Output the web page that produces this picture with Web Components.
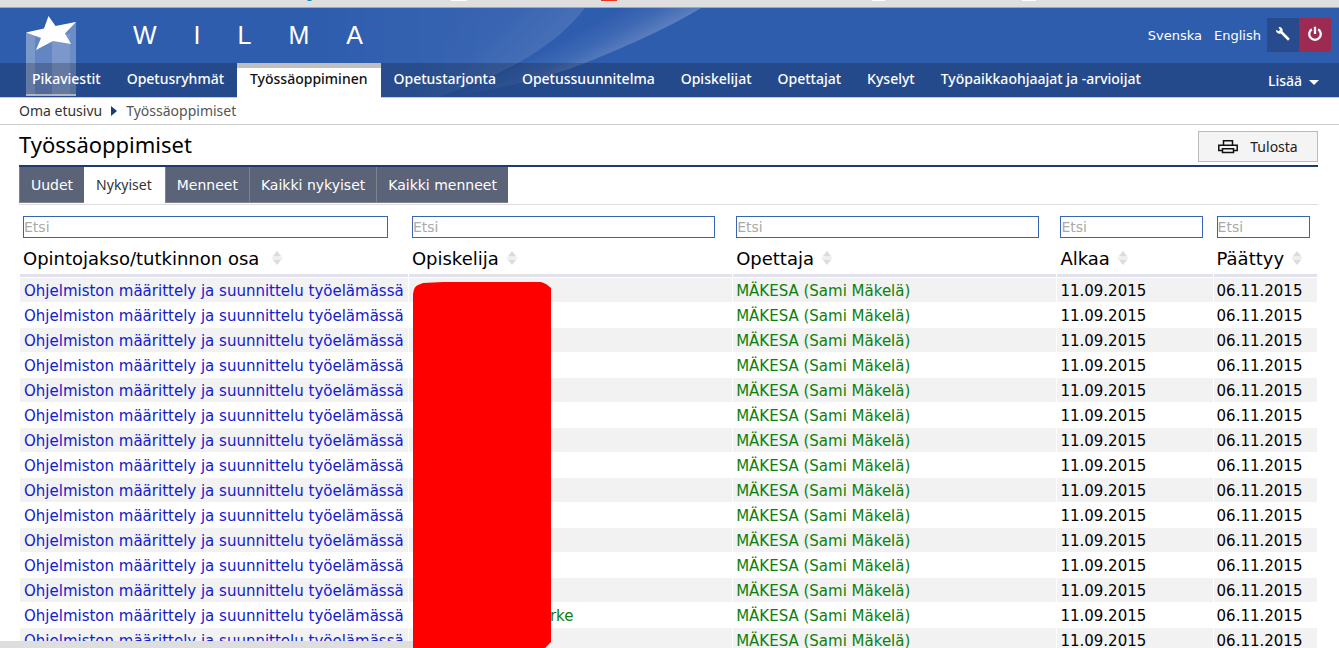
<!DOCTYPE html>
<html lang="fi">
<head>
<meta charset="utf-8">
<title>Wilma – Työssäoppimiset</title>
<style>
  html, body { margin: 0; background: #fff; }
  body { overflow: hidden; color: #000; font-family: "Noto Sans", "Open Sans", sans-serif; font-size: 14px; --wide: "DejaVu Sans", Verdana, sans-serif; }
</style>
</head>
<body>
<wilma-app></wilma-app>
<script>
function define(name, html, setup) {
  const template = document.createElement('template');
  template.innerHTML = html;
  customElements.define(name, class extends HTMLElement {
    connectedCallback() {
      if (this.shadowRoot) return;
      const root = this.attachShadow({ mode: 'open' });
      root.append(template.content.cloneNode(true));
      if (setup) setup(this, root);
    }
  });
}

/* Strip of browser chrome above the page */
define('browser-edge', `
<style>
  :host { display: block; height: 7px; background: #dedede; border-bottom: 1px solid #a6a6a6; }
  svg { display: block; width: 100%; height: 7px; }
</style>
<svg aria-hidden="true">
  <path d="M307 0h5l-1 1h-3z" fill="#1f88ba"/>
  <path d="M451 0h16v1h-16z" fill="#fff"/>
  <path d="M601 0h16v1h-16z" fill="#ee3324"/>
  <path d="M872 0h13v1h-13zM1022 0h14v1h-14z" fill="#fff"/>
</svg>`);

define('wilma-brand', `
<style>
  :host { display: flex; gap: 37px; font: 25px/28px "Liberation Sans", Arial, sans-serif; color: #fff; }
</style>
<span>W</span><span>I</span><span>L</span><span>M</span><span>A</span>`);

define('nav-item', `
<style>
  :host { display: block; }
  a { display: block; box-sizing: border-box; height: 34px; padding: 5px 13px 0; line-height: 22px; color: #fff; font-weight: 500; text-decoration: none; white-space: nowrap; }
  :host([active]) a { height: 35px; margin-bottom: -1px; padding-top: 0; border-top: 5px solid #bfbfbf; background: #fff; color: #111; }
</style>
<a href="#"><slot></slot></a>`);

define('wilma-header', `
<style>
  :host { display: block; position: relative; background: #2f5dae; border-bottom: 1px solid #c6cad8; }
  .art { position: absolute; left: 0; top: 0; width: 760px; height: 89px; }
  .top, nav { position: relative; display: flex; align-items: center; }
  .top { box-sizing: border-box; height: 55px; padding: 0 8px 2px 133px; }
  .tools { display: flex; align-items: center; margin-left: auto; }
  .lang { margin: 2px 12px 0 0; color: #fff; font-family: var(--wide); font-size: 13px; text-decoration: none; }
  .lang:nth-of-type(2) { margin-right: 6px; }
  button { display: flex; align-items: center; justify-content: center; border: 0; padding: 0; color: #fff; font: inherit; }
  .tool { width: 32px; height: 34px; background: #274b8c; }
  .tool svg { margin-bottom: 2px; }
  .exit { background: #9d2a51; }
  nav { height: 34px; padding-left: 19px; background: rgba(0,0,0,.2); align-items: flex-start; }
  .more { height: 34px; margin-left: auto; padding-right: 20px; gap: 7px; background: none; font-size: 14px; font-weight: 500; }
  .more svg { margin-top: 4px; }
</style>
<svg class="art" viewBox="0 0 760 89" aria-hidden="true">
  <defs>
    <linearGradient id="g1" gradientUnits="userSpaceOnUse" x1="562" y1="28" x2="500" y2="-34">
      <stop offset="0" stop-color="#fff" stop-opacity=".12"/><stop offset=".6" stop-color="#fff" stop-opacity=".05"/><stop offset="1" stop-color="#fff" stop-opacity=".04"/>
    </linearGradient>
    <linearGradient id="g2" gradientUnits="userSpaceOnUse" x1="640" y1="34" x2="622" y2="0">
      <stop offset="0" stop-color="#fff" stop-opacity=".22"/><stop offset=".5" stop-color="#fff" stop-opacity=".07"/><stop offset="1" stop-color="#fff" stop-opacity="0"/>
    </linearGradient>
    <linearGradient id="g0" x1="0" x2="1"><stop offset="0" stop-color="#fff" stop-opacity="0"/><stop offset=".4" stop-color="#fff"/></linearGradient>
    <mask id="m"><rect x="300" width="460" height="89" fill="url(#g0)"/></mask>
  </defs>
  <g mask="url(#m)"><path d="M300 89V0H585C571 18 549 38 518 55Q482 75 437 89Z" fill="url(#g1)"/></g>
  <path d="M437 89Q482 75 518 55C549 38 571 18 585 0H701Q660 25 585 55Q532 76 447 89Z" fill="url(#g2)"/>
  <path d="M26 25L76 14V88H26z" fill="#fff" opacity=".25"/>
  <path d="M26 25h9v63h-9zM52 29l18-4v63H52z" fill="#fff" opacity=".16"/>
  <path d="M70 14h6v74h-6z" fill="#fff" opacity=".06"/>
  <path d="M26 86h50v2H26z" fill="#fff" opacity=".75"/>
  <path d="M48.500 8L55.500 18L76 14L65 25.500L71 36L53 33L36 42L41 30L26 24.500L44 20.500Z" fill="#fff"/>
</svg>
<div class="top">
  <wilma-brand></wilma-brand>
  <div class="tools">
    <a class="lang" href="#">Svenska</a><a class="lang" href="#">English</a>
    <button class="tool" aria-label="Asetukset"><svg width="16" height="16" viewBox="0 0 16 16"><path d="M3.500 1.200A3.400 3.400 0 0 1 7.600 5.600L14.800 12.800L13 14.800L5.800 7.400A3.400 3.400 0 0 1 1 3.800L3.600 5.200L5 3.800Z" fill="#fff"/></svg></button>
    <button class="tool exit" aria-label="Kirjaudu ulos"><svg width="16" height="16" viewBox="0 0 16 16" fill="none" stroke="#fff" stroke-width="2.300"><path d="M4.800 3.200A5.800 5.800 0 1 0 11.200 3.200M8 0.800V8"/></svg></button>
  </div>
</div>
<nav>
  <nav-item>Pikaviestit</nav-item><nav-item>Opetusryhmät</nav-item><nav-item active>Työssäoppiminen</nav-item><nav-item>Opetustarjonta</nav-item><nav-item>Opetussuunnitelma</nav-item><nav-item>Opiskelijat</nav-item><nav-item>Opettajat</nav-item><nav-item>Kyselyt</nav-item><nav-item>Työpaikkaohjaajat ja -arvioijat</nav-item>
  <button class="more">Lisää <svg width="10" height="5" viewBox="0 0 10 5"><path d="M0 0h10L5 5z" fill="#fff"/></svg></button>
</nav>`);

define('bread-crumbs', `
<style>
  :host { display: flex; align-items: center; gap: 9px; box-sizing: border-box; height: 27px; padding: 0 19px 2px; border-bottom: 1px solid #ccc; color: #555; }
  a { color: #333; text-decoration: none; }
  svg { margin-top: 2px; }
</style>
<a href="#">Oma etusivu</a>
<svg width="6" height="10" viewBox="0 0 6 10" aria-hidden="true"><path d="M0 0L6 5L0 10z" fill="#1d3a75"/></svg>
<span>Työssäoppimiset</span>`);

define('page-title', `
<style>
  :host { display: flex; align-items: flex-start; justify-content: space-between; box-sizing: border-box; height: 42px; padding-top: 6px; border-bottom: 2px solid #1d3b70; }
  h1 { margin: 0; font-size: 22px; font-weight: 400; line-height: 26px; }
  button { display: flex; align-items: center; justify-content: center; gap: 12px; width: 120px; height: 31px; border: 1px solid #bbb; background: #f4f4f4; color: #222; font: inherit; padding: 0; }
</style>
<h1>Työssäoppimiset</h1>
<button><svg width="20" height="14" viewBox="0 0 20 14" fill="none" stroke="#111" stroke-width="1.500" aria-hidden="true"><path d="M5.500 5V.8h9V5M4 10.500H.8V5.200h18.400v5.300H16M4.500 8.800h11v3.700h-11z"/></svg>Tulosta</button>`);

define('tab-link', `
<style>
  :host { display: block; }
  a { display: block; box-sizing: border-box; height: 36px; padding: 0 11px; border: solid #7f828a; border-width: 0 0 1px 1px; background: #5b6378; color: #fff; font-family: var(--wide); line-height: 36px; text-decoration: none; white-space: nowrap; }
  :host([active]) a { padding-right: 13px; border-color: #fff; background: #fff; color: #333; font-family: inherit; }
</style>
<a href="#"><slot></slot></a>`);

define('tab-bar', `
<style>:host { display: flex; height: 37px; border-bottom: 1px solid #ddd; }</style>
<tab-link>Uudet</tab-link><tab-link active>Nykyiset</tab-link><tab-link>Menneet</tab-link><tab-link>Kaikki nykyiset</tab-link><tab-link>Kaikki menneet</tab-link>`);

define('sort-icon', `
<style>:host { display: inline-block; margin-left: 7px; } svg { display: block; }</style>
<svg width="12" height="14" viewBox="0 0 12 14" aria-hidden="true"><path d="M6 0l4.500 5.500h-9zM6 14l4.500-5.500h-9z" fill="#dcdcdc"/><path d="M.5 6h11v2H.5z" fill="#f0f0f0"/></svg>`);

define('placement-table', `
<style>
  :host { display: block; }
  table { width: 100%; table-layout: fixed; border-collapse: separate; border-spacing: 1px; font-family: var(--wide); }
  .a { width: 30%; } .b { width: 25%; } .d { width: 12%; } .e { width: 8%; }
  th, td { box-sizing: border-box; padding: 0 3px; text-align: left; font-weight: 400; white-space: nowrap; }
  .filters th { height: 35px; padding-top: 7px; }
  input { display: block; box-sizing: border-box; width: 95.5%; height: 22px; padding: 0; border: 1px solid #3765b5; border-radius: 0; background: #fff; font: 14px "DejaVu Sans", sans-serif; }
  input::placeholder { color: #aaa; opacity: 1; }
  .heads th { height: 35px; padding-top: 2px; border-bottom: 3px solid #e2e2ee; font-size: 18px; line-height: 28px; }
  .wide { margin-left: 12px; }
  td { height: 24px; padding-top: 2px; font-size: 15px; line-height: 22px; }
  td:first-child { padding-left: 4px; }
  tbody tr:nth-child(odd) td { background: #f2f2f2; }
  td a { color: #1320cc; text-decoration: none; }
  td .person { color: #0d800d; }
  .student { position: relative; }
  .cover { position: absolute; z-index: 1; left: 4px; top: 4px; }
  .tail { margin-left: 138px; }
</style>
<table>
  <colgroup><col class="a"><col class="b"><col class="b"><col class="d"><col class="e"></colgroup>
  <thead>
    <tr class="filters"></tr>
    <tr class="heads"><th>Opintojakso/tutkinnon osa<sort-icon class="wide"></sort-icon></th><th>Opiskelija<sort-icon></sort-icon></th><th>Opettaja<sort-icon></sort-icon></th><th>Alkaa<sort-icon></sort-icon></th><th>Päättyy<sort-icon></sort-icon></th></tr>
  </thead>
  <tbody></tbody>
</table>`, (host, root) => {
  const names = ['Opintojakso/tutkinnon osa', 'Opiskelija', 'Opettaja', 'Alkaa', 'Päättyy'];
  root.querySelector('.filters').innerHTML = names.map(n => `<th><input type="text" placeholder="Etsi" aria-label="Etsi: ${n}"></th>`).join('');
  const cover = '<svg class="cover" width="138" height="366" viewBox="0 0 138 366" aria-hidden="true"><path d="M0 12Q1 4 5 3L10 1L30 0H128L133 2L138 6V360L132 366H0Z" fill="#f00"/></svg>';
  let rows = '';
  for (let i = 0; i < 15; i++) {
    const student = i === 0 ? cover : i === 13 ? '<a class="person tail" href="#">rke</a>' : '';
    rows += `<tr><td><a href="#">Ohjelmiston määrittely ja suunnittelu työelämässä</a></td><td class="student">${student}</td><td><a class="person" href="#">MÄKESA (Sami Mäkelä)</a></td><td>11.09.2015</td><td>06.11.2015</td></tr>`;
  }
  root.querySelector('tbody').innerHTML = rows;
});

/* Status bubble in the lower left corner of the browser window */
define('status-bubble', `
<style>:host { display: block; position: fixed; left: 0; bottom: 0; width: 414px; height: 7px; background: #dedede; }</style>`);

define('wilma-app', `
<style>
  :host { display: block; }
  main { padding: 0 21px 0 19px; }
</style>
<browser-edge></browser-edge>
<wilma-header></wilma-header>
<bread-crumbs></bread-crumbs>
<main>
  <page-title></page-title>
  <tab-bar></tab-bar>
  <placement-table></placement-table>
</main>
<status-bubble></status-bubble>`);
</script>
</body>
</html>
